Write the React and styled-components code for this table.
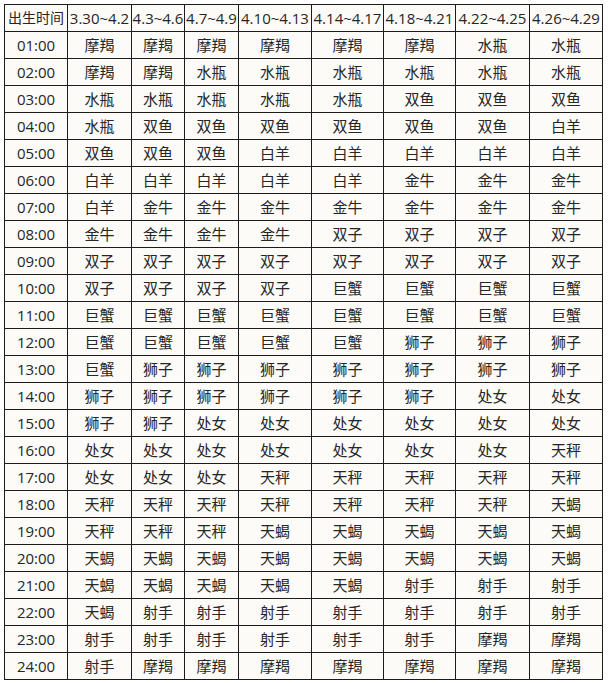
import React from "react";
import styled, { createGlobalStyle } from "styled-components";

const Global = createGlobalStyle`
  html, body { margin: 0; padding: 0; background: #ffffff; }
  body { font-family: "Open Sans", "Noto Sans CJK SC", sans-serif; color: #2a2a2a; }
`;

const Page = styled.div`
  padding: 4px 6px 4px 4px;
  width: 608px;
  box-sizing: border-box;
`;

const Table = styled.table`
  width: 598px;
  border-collapse: collapse;
  table-layout: fixed;
  background: #fcfbf8;
`;

const Row = styled.tr`
  height: 27px;
`;

const Cell = styled.td`
  border: 1px solid #1c1c1c;
  padding: 0;
  text-align: center;
  vertical-align: middle;
  font-size: ${(p) => p.$size || "15px"};
  font-weight: 400;
  line-height: 1;
  white-space: nowrap;
  overflow: hidden;
  color: #262626;
`;

const widths = [63, 64, 53, 54, 73, 72, 72, 74, 73];
const header = ["出生时间", "3.30~4.2", "4.3~4.6", "4.7~4.9", "4.10~4.13", "4.14~4.17", "4.18~4.21", "4.22~4.25", "4.26~4.29"];

const raw = `摩羯 摩羯 摩羯 摩羯 摩羯 摩羯 水瓶 水瓶
摩羯 摩羯 水瓶 水瓶 水瓶 水瓶 水瓶 水瓶
水瓶 水瓶 水瓶 水瓶 水瓶 双鱼 双鱼 双鱼
水瓶 双鱼 双鱼 双鱼 双鱼 双鱼 双鱼 白羊
双鱼 双鱼 双鱼 白羊 白羊 白羊 白羊 白羊
白羊 白羊 白羊 白羊 白羊 金牛 金牛 金牛
白羊 金牛 金牛 金牛 金牛 金牛 金牛 金牛
金牛 金牛 金牛 金牛 双子 双子 双子 双子
双子 双子 双子 双子 双子 双子 双子 双子
双子 双子 双子 双子 巨蟹 巨蟹 巨蟹 巨蟹
巨蟹 巨蟹 巨蟹 巨蟹 巨蟹 巨蟹 巨蟹 巨蟹
巨蟹 巨蟹 巨蟹 巨蟹 巨蟹 狮子 狮子 狮子
巨蟹 狮子 狮子 狮子 狮子 狮子 狮子 狮子
狮子 狮子 狮子 狮子 狮子 狮子 处女 处女
狮子 狮子 处女 处女 处女 处女 处女 处女
处女 处女 处女 处女 处女 处女 处女 天秤
处女 处女 处女 天秤 天秤 天秤 天秤 天秤
天秤 天秤 天秤 天秤 天秤 天秤 天秤 天蝎
天秤 天秤 天秤 天蝎 天蝎 天蝎 天蝎 天蝎
天蝎 天蝎 天蝎 天蝎 天蝎 天蝎 天蝎 天蝎
天蝎 天蝎 天蝎 天蝎 天蝎 射手 射手 射手
天蝎 射手 射手 射手 射手 射手 射手 射手
射手 射手 射手 射手 射手 射手 摩羯 摩羯
射手 摩羯 摩羯 摩羯 摩羯 摩羯 摩羯 摩羯`;

const rows = raw.split("\n").map((line, i) => ({
  time: `${String(i + 1).padStart(2, "0")}:00`,
  signs: line.trim().split(/\s+/),
}));

export default function App() {
  return (
    <>
      <Global />
      <Page>
        <Table>
          <colgroup>
            {widths.map((w, i) => (
              <col key={i} style={{ width: w }} />
            ))}
          </colgroup>
          <thead>
            <Row>
              {header.map((h, i) => (
                <Cell as="th" key={h} $size={i === 0 ? "14px" : "15px"}>
                  {h}
                </Cell>
              ))}
            </Row>
          </thead>
          <tbody>
            {rows.map((r) => (
              <Row key={r.time}>
                <Cell>{r.time}</Cell>
                {r.signs.map((s, j) => (
                  <Cell key={j}>{s}</Cell>
                ))}
              </Row>
            ))}
          </tbody>
        </Table>
      </Page>
    </>
  );
}
